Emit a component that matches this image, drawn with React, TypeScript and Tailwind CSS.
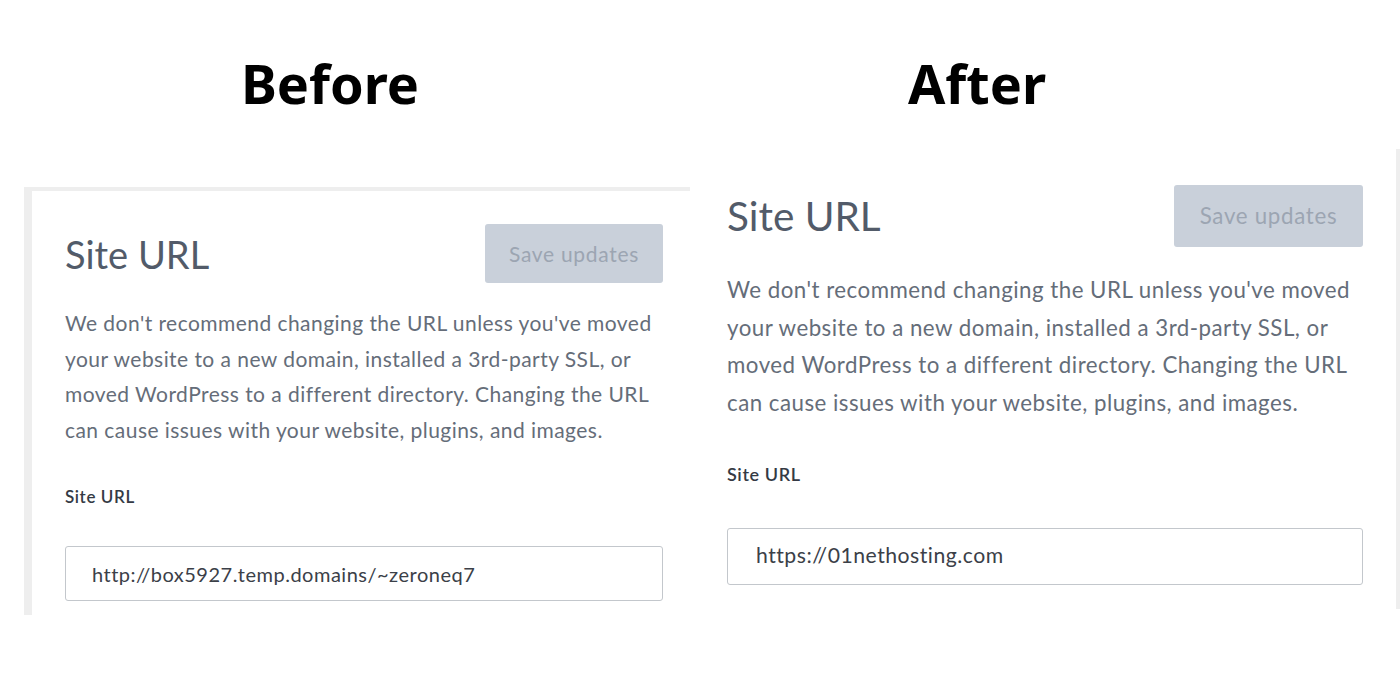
import React from 'react'

const ui = { fontFamily: 'Lato, "Open Sans", sans-serif' }
const headFont = { fontFamily: '"Noto Sans", "Open Sans", sans-serif' }

interface PanelProps {
  url: string
  big?: boolean
}

function SiteUrlBody({ url, big }: PanelProps) {
  return (
    <div style={ui}>
      <div className="flex items-center justify-between">
        <h2
          className={
            big
              ? 'text-[40.5px] leading-none font-normal text-[#525b69]'
              : 'text-[38px] leading-none font-normal text-[#525b69]'
          }
        >
          Site URL
        </h2>
        <button
          disabled
          className={
            big
              ? 'w-[189px] h-[62px] rounded-[3px] bg-[#c9d0da] text-[22.3px] tracking-[0.7px] text-[#9ca5b2]'
              : 'w-[178px] h-[59px] rounded-[3px] bg-[#c9d0da] text-[21px] tracking-[0.7px] text-[#9ca5b2]'
          }
        >
          Save updates
        </button>
      </div>
      <p
        className={
          big
            ? 'mt-[24px] text-[22.3px] tracking-[0.48px] leading-[37.7px] text-[#656d79]'
            : 'mt-[22px] text-[21px] tracking-[0.45px] leading-[35.5px] text-[#656d79]'
        }
      >
        We don't recommend changing the URL unless you've moved your website to a new domain,
        installed a 3rd-party SSL, or moved WordPress to a different directory. Changing the URL
        can cause issues with your website, plugins, and images.
      </p>
      <label
        className={
          big
            ? 'block mt-[40px] text-[18px] tracking-[0.6px] leading-[25px] font-semibold text-[#343a44]'
            : 'block mt-[38px] text-[17px] tracking-[0.6px] leading-[24px] font-semibold text-[#343a44]'
        }
      >
        Site URL
      </label>
      <div
        className={
          big
            ? 'mt-[41px] h-[57px] flex items-center px-[28px] border border-[#c3c7cc] rounded-[3px] text-[21.2px] tracking-[0.5px] text-[#3b4048]'
            : 'mt-[37px] h-[55px] flex items-center px-[26px] border border-[#c3c7cc] rounded-[3px] text-[20px] tracking-[0.5px] text-[#3b4048]'
        }
      >
        {url}
      </div>
    </div>
  )
}

export default function App() {
  return (
    <div className="w-[1400px] h-[677px] overflow-hidden bg-white flex">
      <div className="w-[690px] pt-[55px]">
        <h1 className="w-[660px] text-center text-[54px] leading-[56px] font-bold text-black" style={headFont}>
          Before
        </h1>
        <section className="ml-[24px] mt-[76px] border-l-[8px] border-t-[4px] border-[#eeeeee] pl-[33px] pr-[27px] pt-[33px] pb-[14px]">
          <SiteUrlBody url="http://box5927.temp.domains/~zeroneq7" />
        </section>
      </div>
      <div className="flex-1 pt-[55px]">
        <h1 className="w-[574px] text-center text-[54px] leading-[56px] font-bold text-black" style={headFont}>
          After
        </h1>
        <section className="ml-[7px] mt-[38px] border-r-[4px] border-[#eeeeee] pl-[30px] pr-[33px] pt-[36px] pb-[24px]">
          <SiteUrlBody url="https://01nethosting.com" big />
        </section>
      </div>
    </div>
  )
}
